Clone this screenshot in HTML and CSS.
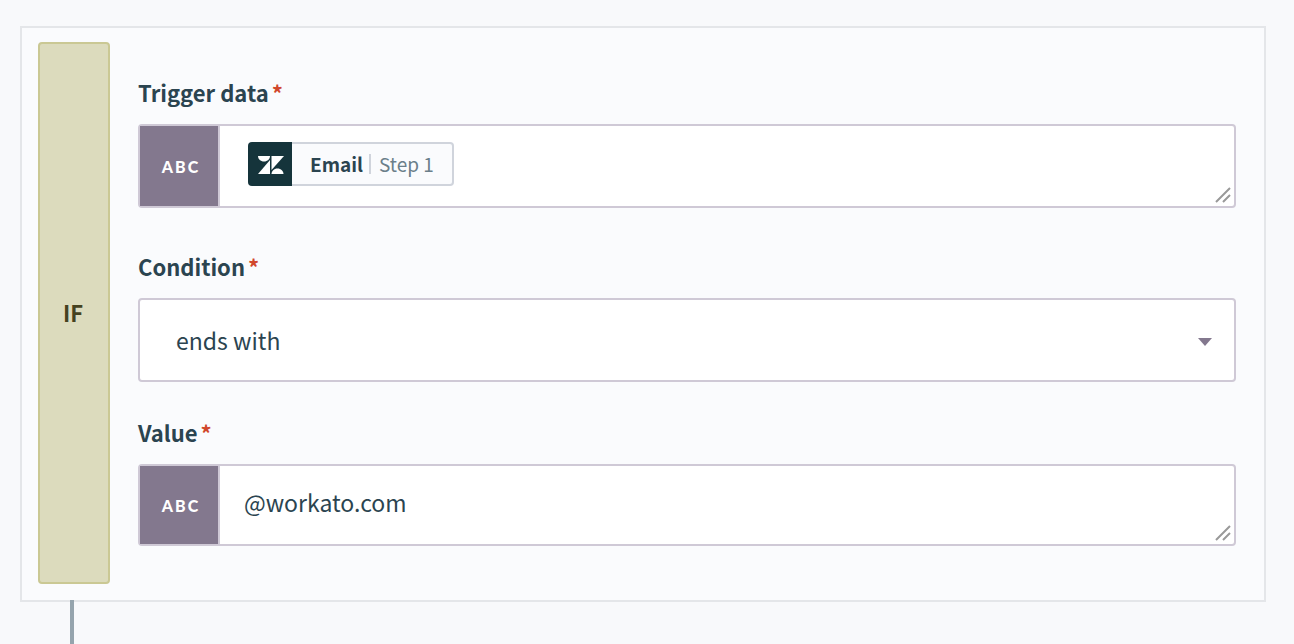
FILE: index.html
```
<!DOCTYPE html>
<html lang="en">
<head>
  <meta charset="UTF-8" />
  <meta name="viewport" content="width=device-width, initial-scale=1" />
  <title>IF condition</title>
  <link rel="stylesheet" href="styles.css">
</head>
<body>
  <form class="condition-card">
    <div class="condition-type">IF</div>
    <div class="condition-fields">
      <div class="field">
        <div class="field-label" id="triggerLabel">Trigger data<span class="required">*</span></div>
        <div class="field-box pill-box">
          <span class="type-badge">ABC</span>
          <div class="field-input pill-input" role="textbox" tabindex="0" aria-labelledby="triggerLabel">
            <span class="pill">
              <span class="pill-icon">
                <svg width="26" height="18" viewBox="0 0 26 18" fill="#fff">
                  <path d="M0 0h12c0 3-2.5 5.500-6 5.500S0 3 0 0z" />
                  <path d="M12 4v14H0z" />
                  <path d="M13.500 0H26L13.500 14z" />
                  <path d="M13.500 18c0-3 2.500-5.500 6-5.500s6 2.500 6 5.500z" />
                </svg>
              </span>
              <span class="pill-body">
                <span class="pill-name">Email</span>
                <span class="pill-step">Step 1</span>
              </span>
            </span>
          </div>
          <svg class="resize-handle" width="16" height="16" viewBox="0 0 16 16">
            <path d="M1 15L15 1M8 15l7-7" />
          </svg>
        </div>
      </div>

      <div class="field">
        <label class="field-label" for="condition">Condition<span class="required">*</span></label>
        <div class="field-box select-box">
          <select class="field-select" id="condition" name="condition">
            <option selected>ends with</option>
          </select>
          <svg class="select-arrow" width="14" height="12" viewBox="0 0 14 12">
            <path d="M0 4h14L7 12z" />
          </svg>
        </div>
      </div>

      <div class="field">
        <label class="field-label" for="value">Value<span class="required">*</span></label>
        <div class="field-box">
          <span class="type-badge">ABC</span>
          <textarea class="field-input value-input" id="value" name="value" rows="1">@workato.com</textarea>
          <svg class="resize-handle" width="16" height="16" viewBox="0 0 16 16">
            <path d="M1 15L15 1M8 15l7-7" />
          </svg>
        </div>
      </div>
    </div>
  </form>
  <div class="connector"></div>
</body>
</html>
```

FILE: styles.css
```
* {
  box-sizing: border-box;
}
body {
  margin: 0;
  padding: 26px 28px 0 20px;
  min-height: 100vh;
  display: flex;
  flex-direction: column;
  background-color: #f8f9fb;
  color: #2b4450;
  font-family: "Noto Sans CJK SC", "Noto Sans", sans-serif;
  font-size: 22px;
  line-height: 28px;
}
.condition-card {
  display: flex;
  gap: 28px;
  padding: 14px 28px 16px 16px;
  background-color: #fafbfd;
  border: 2px solid #e4e6e9;
}
.condition-type {
  width: 72px;
  flex-shrink: 0;
  display: flex;
  align-items: center;
  justify-content: center;
  padding: 0 2px 2px 0;
  background-color: #dcdbbd;
  border: 2px solid #cac894;
  border-radius: 4px;
  color: #45421f;
  font-weight: 700;
}
.condition-fields {
  flex: 1;
  min-width: 0;
  padding: 36px 0 38px;
  display: flex;
  flex-direction: column;
  gap: 36px;
}
.field {
  display: flex;
  flex-direction: column;
  gap: 18px;
}
.field-label {
  font-weight: 700;
}
.required {
  margin-left: 3px;
  color: #d1472c;
}
.field-box {
  display: flex;
  min-height: 82px;
  background-color: #fff;
  border: 2px solid #cfc9d6;
  border-radius: 4px;
}
.pill-box {
  min-height: 84px;
  margin-bottom: 8px;
}
.type-badge {
  width: 80px;
  flex-shrink: 0;
  display: flex;
  align-items: center;
  justify-content: center;
  padding: 1px 0 0 4px;
  background-color: #83788e;
  border-right: 2px solid #cfc9d6;
  color: #fff;
  font-family: Lato, sans-serif;
  font-size: 16px;
  font-weight: 900;
  letter-spacing: 2px;
}
.field-input {
  flex: 1;
  min-width: 0;
  outline: none;
}
.pill-input {
  padding: 16px 28px;
}
.value-input {
  height: 78px;
  padding: 22px 24px;
  background: none;
  border: none;
  resize: none;
  color: inherit;
  font: inherit;
  font-size: 23px;
}
.resize-handle {
  align-self: flex-end;
  flex-shrink: 0;
  margin: 0 3px 3px 0;
  fill: none;
  stroke: #999;
  stroke-width: 2;
}
.pill {
  display: inline-flex;
  height: 44px;
  background-color: #fafbfd;
  border-radius: 4px;
  font-size: 19px;
}
.pill-icon {
  width: 44px;
  display: flex;
  align-items: center;
  justify-content: center;
  padding: 2px 0 0 2px;
  background-color: #15343b;
  border-radius: 4px 0 0 4px;
}
.pill-body {
  display: flex;
  align-items: center;
  padding: 0 18px;
  border: 2px solid #d0d4dc;
  border-left: none;
  border-radius: 0 4px 4px 0;
}
.pill-name {
  font-weight: 700;
}
.pill-step {
  margin-left: 6px;
  padding-left: 8px;
  border-left: 2px solid #d0d4dc;
  line-height: 20px;
  color: #6b7f8a;
}
.select-box {
  min-height: 84px;
  align-items: center;
}
.field-select {
  flex: 1;
  height: 80px;
  padding: 0 36px;
  appearance: none;
  background: none;
  border: none;
  outline: none;
  color: inherit;
  font: inherit;
  font-size: 23px;
}
.select-arrow {
  flex-shrink: 0;
  margin-right: 22px;
  fill: #83788e;
}
.connector {
  flex: 1;
  min-height: 44px;
  width: 4px;
  margin: -2px 0 0 50px;
  position: relative;
  background-color: #95a4ad;
}
```
